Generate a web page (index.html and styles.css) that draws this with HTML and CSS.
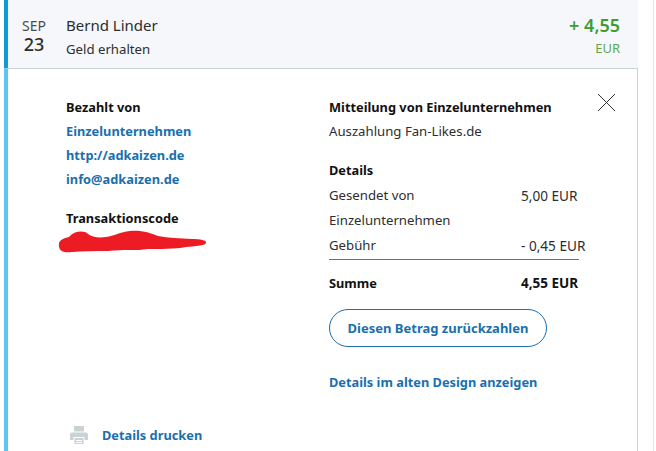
FILE: index.html
```html
<!DOCTYPE html>
<html lang="de">

<head>
    <meta charset="UTF-8">
    <meta name="viewport" content="width=device-width, initial-scale=1.0">
    <title>Aktivität</title>
    <link rel="stylesheet" href="styles.css">
</head>

<body>
    <div class="page">
        <div class="activity">
            <div class="summary">
                <div class="date">
                    <div class="month">SEP</div>
                    <div class="day">23</div>
                </div>
                <div class="who">
                    <div class="name">Bernd Linder</div>
                    <div class="status">Geld erhalten</div>
                </div>
                <div class="amount">
                    <div class="value">+ 4,55</div>
                    <div class="currency">EUR</div>
                </div>
            </div>

            <div class="details">
                <svg class="close" width="20" height="20" viewBox="0 0 20 20">
                    <path d="M1 1 L18 18 M18 1 L1 18" stroke="#2c2e2f" stroke-width="1" fill="none" />
                </svg>

                <div class="columns">
                    <div class="col-left">
                        <div class="line strong">Bezahlt von</div>
                        <div class="line link">Einzelunternehmen</div>
                        <div class="line link">http://adkaizen.de</div>
                        <div class="line link">info@adkaizen.de</div>
                        <div class="line strong code-title">Transaktionscode</div>
                        <svg class="scribble" width="150" height="24" viewBox="0 0 150 24">
                            <path d="M1 13 C2 10 6 8 11 7 C16 1 26 0 30 4 C34 7 40 8 48 7 C56 6 62 2 72 1 C84 0 92 3 100 6 C110 8 122 8 134 9 C142 9 149 10 148 13 C147 16 136 16 128 17 C118 19 100 19 90 19 C78 21 66 19 50 21 C36 21 24 21 14 22 C6 23 0 22 1 13 Z" fill="#ed1c24" />
                        </svg>
                    </div>

                    <div class="col-right">
                        <div class="line strong">Mitteilung von Einzelunternehmen</div>
                        <div class="line">Auszahlung Fan-Likes.de</div>
                        <div class="line strong details-title">Details</div>
                        <div class="row">
                            <div>Gesendet von<br>Einzelunternehmen</div>
                            <div class="sum">5,00 EUR</div>
                        </div>
                        <div class="row fee">
                            <div>Gebühr</div>
                            <div class="sum">- 0,45 EUR</div>
                        </div>
                        <div class="row total">
                            <div>Summe</div>
                            <div class="sum">4,55 EUR</div>
                        </div>
                        <div class="refund">Diesen Betrag zurückzahlen</div>
                        <div class="line link old-design">Details im alten Design anzeigen</div>
                    </div>
                </div>

                <div class="print">
                    <svg width="18" height="18" viewBox="0 0 18 18">
                        <path d="M4 0 H14 V5.5 H4 Z" fill="#cbd2d6" />
                        <path d="M2 6.5 H16 Q18 6.5 18 8.5 V14 H14.5 V11 H3.5 V14 H0 V8.5 Q0 6.5 2 6.5 Z" fill="#cbd2d6" />
                        <path d="M4.5 12 H13.5 V18 H4.5 Z" fill="#cbd2d6" />
                        <path d="M6 14.5 H12 M6 16.5 H12" stroke="#fff" stroke-width="1" />
                    </svg>
                    <span class="print-text">Details drucken</span>
                </div>
            </div>
        </div>
        <div class="next-edge"></div>
    </div>
</body>

</html>
```

FILE: styles.css
```css
html,
body {
    margin: 0;
    height: 100%;
    background: #fff;
    overflow: hidden;
}

body {
    font-family: "Noto Sans", "Open Sans", sans-serif;
    font-size: 13.2px;
    color: #2c2e2f;
}

.page {
    display: flex;
    height: 451px;
    padding-left: 4px;
}

.activity {
    width: 634px;
    flex-shrink: 0;
}

.next-edge {
    width: 1px;
    margin-left: 15px;
    background: #e4e6e8;
}

.summary {
    display: flex;
    height: 68px;
    box-sizing: border-box;
    background: #f5f7fa;
    border-left: 4px solid #0f9bd8;
    padding: 15px 18px 0 12px;
}

.date {
    width: 28px;
    margin-top: 2px;
    text-align: center;
}

.month {
    font-size: 14px;
    line-height: 17px;
    color: #4a4d4f;
}

.day {
    font-size: 18px;
    font-weight: 500;
    line-height: 20px;
}

.who {
    margin-left: 18px;
    flex: 1;
}

.name {
    font-size: 15px;
    line-height: 20px;
}

.status {
    margin-top: 4px;
    line-height: 20px;
}

.amount {
    text-align: right;
    color: #3f9c35;
}

.value {
    font-size: 18px;
    font-weight: 600;
    line-height: 20px;
}

.currency {
    margin-top: 3px;
    font-size: 13px;
    line-height: 20px;
    color: #5ca84f;
}

.details {
    position: relative;
    height: 383px;
    box-sizing: border-box;
    border-left: 4px solid #5bc6f5;
    border-right: 1px solid #cbd2d6;
    border-top: 1px solid #cbd2d6;
    padding: 26px 0 0 58px;
}

.close {
    position: absolute;
    top: 24px;
    right: 20px;
}

.columns {
    display: flex;
}

.col-left {
    width: 263px;
}

.col-right {
    width: 250px;
}

.line {
    line-height: 24px;
    white-space: nowrap;
}

.strong {
    font-weight: 700;
    font-size: 12.8px;
    color: #111;
}

.link {
    font-weight: 700;
    font-size: 12.8px;
    color: #1a6fad;
}

.code-title {
    margin-top: 17px;
    line-height: 20px;
}

.scribble {
    display: block;
    margin: 2px 0 0 -8px;
}

.details-title {
    margin-top: 15px;
}

.row {
    display: grid;
    grid-template-columns: 192px 58px;
    line-height: 25px;
    white-space: nowrap;
}

.details-title + .row {
    margin-top: 1px;
}

.sum {
    font-size: 13.6px;
}

.fee {
    padding-bottom: 1px;
    border-bottom: 1px solid #6c7378;
}

.total {
    margin-top: 11px;
    font-weight: 700;
    font-size: 12.8px;
    color: #111;
}

.total .sum {
    font-size: 13.5px;
}

.refund {
    width: 218px;
    height: 38px;
    box-sizing: border-box;
    margin-top: 13px;
    border: 1px solid #1a6fad;
    border-radius: 19px;
    text-align: center;
    line-height: 36px;
    font-weight: 700;
    font-size: 13px;
    color: #1a6fad;
}

.old-design {
    margin-top: 23px;
}

.print {
    position: absolute;
    left: 62px;
    top: 357px;
    display: flex;
    align-items: center;
    gap: 14px;
}

.print-text {
    font-weight: 700;
    font-size: 12.8px;
    color: #1a6fad;
}
```
